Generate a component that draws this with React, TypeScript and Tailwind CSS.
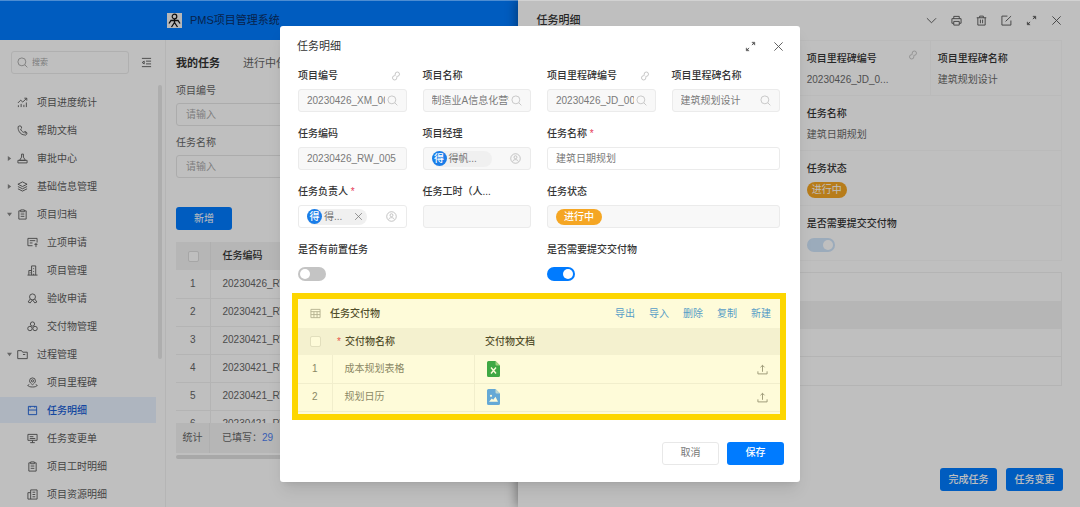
import { ReactNode } from "react"
import clsx from "clsx"

const icons: Record<string, ReactNode> = {
    chart: <path d="M1.5 11V9M4.5 11V7.5M7.5 11V8.5M10.2 11V6M1 6.5L4 3.5L6.3 5.5L10.5 1.5M8 1.3H10.7V4" />,
    phone: <path d="M3 1A1.8 1.8 0 0 1 4 4.4C4.3 6 5.6 7.4 7.4 8A1.9 1.9 0 1 1 8 10.8C4.5 10.6 1.6 7.6 1.2 3.4A1.9 1.9 0 0 1 3 1M9 7.6V9.4" />,
    stamp: <path d="M5 1.2H7V4.5L9.2 8H2.8L5 4.5ZM1 8H11V10.8H1Z" />,
    layers: <path d="M6 1L11 3.5L6 6L1 3.5ZM1 6L6 8.5L11 6M1 8.5L6 11L11 8.5" />,
    clipboard: <path d="M4 2H2V11H10V2H8M4 1H8V3H4ZM4 5.5H8M4 8H8" />,
    apply: <path d="M11 6V1.5H1V9.5H6M3 4H9M3 6.5H6M8 8H11.5M9.8 6.5V11" />,
    building: <path d="M.5 11H11.5M2 11V6H5M5 11V1H9.5V11M7.2 3.5V4.5M7.2 6.5V7.5M7.2 9.5V11M3.5 8V9" />,
    medal: <path d="M6 1A3.2 3.2 0 1 1 6 7.5A3.2 3.2 0 1 1 6 1M3.6 6.5L1.2 9.8L3.5 10.8L6 7.5L8.5 10.8L10.8 9.8L8.4 6.5" />,
    boxes: <path d="M6 1A2.3 2.3 0 1 1 6 5.6A2.3 2.3 0 1 1 6 1M3.2 5.8A2.4 2.4 0 1 1 3.2 10.6A2.4 2.4 0 1 1 3.2 5.8M8.8 5.8A2.4 2.4 0 1 1 8.8 10.6A2.4 2.4 0 1 1 8.8 5.8" />,
    folder: <path d="M.8 10.5V1.8H5L6.2 3.5H11.2V10.5ZM6.5 6H9" />,
    pin: <path d="M6 1A3.2 3.2 0 0 1 9.2 4.2C9.2 6 7.5 7.2 6 8.4C4.5 7.2 2.8 6 2.8 4.2A3.2 3.2 0 0 1 6 1M6 3A1.2 1.2 0 1 1 6 5.4A1.2 1.2 0 1 1 6 3M2.5 8.2L.8 9.2C2 11.5 10 11.5 11.2 9.2L9.5 8.2" />,
    task: <path d="M1.5 1.5H10.5V10.5H1.5ZM1.5 5.5H10.5M3.5 1.5V3M8.5 1.5V3" />,
    monitor: <path d="M1 1.5H11V8H1ZM3 4H7M3 6H9M6 8V10.5M3.5 10.5H8.5" />,
    resource: <path d="M4 11V1H11V11H1V4H4M6 3.5H9M6 6H9M6 8.5H9" />,
    search: <path d="M5.3 1A4.3 4.3 0 1 1 5.3 9.6A4.3 4.3 0 1 1 5.3 1M8.5 8.5L11.3 11.3" />,
    fold: <path d="M1 1.5H11M5.5 4.5H11M5.5 7.5H11M1 10.5H11M3.5 4.5L1.3 6L3.5 7.5Z" />,
    down: <path d="M1 3.5L6 8.5L11 3.5" />,
    printer: <path d="M3 4V1.5H9V4M3 9H1V4H11V9H9M3 7H9V11H3Z" />,
    trash: <path d="M.8 3H11.2M4 3V1.2H8V3M2 3V11H10V3M4.8 5V9M7.2 5V9" />,
    edit: <path d="M7 1.2H1V11H10.8V6M5 7L11 1.2" />,
    close: <path d="M1.5 1.5L10.5 10.5M10.5 1.5L1.5 10.5" />,
    link: <path d="M5 5.2V3.8A2.6 2.6 0 1 1 7.8 6.4H6.8M7 6.8V8.2A2.6 2.6 0 1 1 4.2 5.6H5.2" />,
    user: <path d="M6 .8A5.2 5.2 0 1 1 6 11.2A5.2 5.2 0 1 1 6 .8M6 3A1.6 1.6 0 1 1 6 6.2A1.6 1.6 0 1 1 6 3M3 9.2C3.5 6.6 8.5 6.6 9 9.2" />,
    sheet: <path d="M1 1.5H11V10.5H1ZM1 4H11M1 7.2H11M4.3 4V10.5M7.7 4V10.5" />,
    upload: <path d="M6 8.5V1.5M3.8 3.6L6 1.4L8.2 3.6M1 8V10.8H11V8" />,
}

const Icon = ({ name, className }: { name: string; className?: string }) => (
    <svg viewBox="0 0 12 12" fill="none" stroke="currentColor" strokeLinejoin="round" aria-hidden="true" className={clsx("shrink-0", className ?? "size-[11px]")}>
        {icons[name]}
    </svg>
)

const ExpandIcon = () => (
    <svg viewBox="0 0 12 12" fill="currentColor" stroke="currentColor" aria-hidden="true" className="size-[11px] shrink-0">
        <path d="M7.5 4.5L10 2M4.5 7.5L2 10" />
        <path d="M7.5 1.3H10.7V4.5ZM1.3 7.5V10.7H4.5Z" strokeWidth="0.5" />
    </svg>
)

const menu = [
    { icon: "chart", text: "项目进度统计" },
    { icon: "phone", text: "帮助文档" },
    { icon: "stamp", text: "审批中心", caret: "right" },
    { icon: "layers", text: "基础信息管理", caret: "right" },
    { icon: "clipboard", text: "项目归档", caret: "down" },
    { icon: "apply", text: "立项申请", child: true },
    { icon: "building", text: "项目管理", child: true },
    { icon: "medal", text: "验收申请", child: true },
    { icon: "boxes", text: "交付物管理", child: true },
    { icon: "folder", text: "过程管理", caret: "down" },
    { icon: "pin", text: "项目里程碑", child: true },
    { icon: "task", text: "任务明细", child: true, active: true },
    { icon: "monitor", text: "任务变更单", child: true },
    { icon: "clipboard", text: "项目工时明细", child: true },
    { icon: "resource", text: "项目资源明细", child: true },
]

const Sidebar = () => (
    <aside className="flex w-[166px] shrink-0 flex-col overflow-hidden border-r border-[#f2f2f2] text-[#5c5c5c]">
        <div className="flex items-center gap-3 pt-[11px] pl-[11px]">
            <label className="flex h-[23px] w-[118px] items-center gap-1 rounded-[3px] border border-[#ebebeb] px-[5px] text-[#a6a6a6]">
                <Icon name="search" />
                <input aria-label="搜索" placeholder="搜索" className="w-full min-w-0 text-[8px] outline-none placeholder:text-[#a6a6a6]" />
            </label>
            <button aria-label="收起菜单" className="cursor-pointer"><Icon name="fold" /></button>
        </div>

        <div className="mt-[11px] flex min-h-0 flex-1">
            <nav className="mt-1 flex w-[156px] flex-col gap-0.5">
                {menu.map((item) => (
                    <a key={item.text} href="#" className={clsx("flex h-[26px] shrink-0 items-center", item.child ? "pl-[17px]" : "pl-[7px]", item.active && "bg-[#e8f2ff] font-medium text-[#1a5fd6]")}>
                        <span className="mr-1 w-1.5">
                            {item.caret && (
                                <svg viewBox="0 0 6 6" fill="#888" className={clsx("size-[5px]", item.caret === "down" && "rotate-90")}>
                                    <path d="M1 0L5 3L1 6Z" />
                                </svg>
                            )}
                        </span>
                        <Icon name={item.icon} />
                        <span className="ml-[9px] pt-px">{item.text}</span>
                    </a>
                ))}
            </nav>
            <div className="ml-0.5 h-[274px] w-1 rounded-full bg-[#e8e8e8]" />
        </div>
    </aside>
)

const rows = ["20230426_RW_005", "20230421_RW_004", "20230421_RW_003", "20230421_RW_002", "20230421_RW_001", "20230421_RW_000"]

const Checkbox = ({ label }: { label: string }) => (
    <input type="checkbox" aria-label={label} className="block size-[11px] appearance-none rounded-xs border border-[#dedede] bg-white" />
)

const TaskList = () => (
    <main className="flex min-w-0 flex-1 flex-col pt-[15px] pl-[10px] text-[#666]">
        <div className="flex h-4 items-center gap-[23px] text-[11px]">
            <button className="shrink-0 font-bold text-[#333]">我的任务</button>
            <button className="shrink-0">进行中任务</button>
        </div>

        <label htmlFor="f-project" className="mt-3 leading-4">项目编号</label>
        <input id="f-project" placeholder="请输入" className="mt-1 h-[23px] w-[220px] rounded-[3px] border border-[#e6e6e6] px-[9px] outline-none placeholder:text-[#aaa]" />
        <label htmlFor="f-task" className="mt-[9px] leading-4">任务名称</label>
        <input id="f-task" placeholder="请输入" className="mt-1 h-[23px] w-[220px] rounded-[3px] border border-[#e6e6e6] px-[9px] outline-none placeholder:text-[#aaa]" />

        <button className="mt-[29px] h-[23px] w-14 rounded-[3px] bg-[#007bff] text-white">新增</button>

        <div className="mt-3 h-[181px] overflow-hidden">
            <table className="w-full table-fixed border-collapse text-left">
                <thead>
                    <tr className="h-7 bg-[#f3f3f3]">
                        <th className="w-[34px] border-r border-[#eaeaea] pl-3"><Checkbox label="全选任务" /></th>
                        <th className="pl-3 font-medium text-[#333]">任务编码</th>
                    </tr>
                </thead>
                <tbody>
                    {rows.map((code, i) => (
                        <tr key={code} className="h-7 border-b border-[#f0f0f0]">
                            <td className="border-r border-[#f0f0f0] text-center">{i + 1}</td>
                            <td className="pl-3">{code}</td>
                        </tr>
                    ))}
                </tbody>
            </table>
        </div>
        <div className="flex h-[30px] items-center bg-[#f3f3f3]">
            <span className="flex h-full w-[34px] items-center justify-center border-r border-[#eaeaea]">统计</span>
            <span className="pl-3">已填写：<span className="text-[#4d7ef0]">29</span></span>
        </div>
        <div className="mt-0.5 h-1 rounded-full bg-[#e0e0e0]" />
    </main>
)

const Switch = ({ id, checked, soft }: { id: string; checked?: boolean; soft?: boolean }) => (
    <input
        id={id}
        type="checkbox"
        role="switch"
        defaultChecked={checked}
        className={clsx(
            "flex h-[14px] w-7 appearance-none items-center rounded-full bg-[#c4c4c4] px-0.5 before:size-[10px] before:rounded-full before:bg-white before:content-[''] checked:justify-end",
            soft ? "checked:bg-[#cfe4fa]" : "checked:bg-[#007bff]",
        )}
    />
)

const DetailCell = ({ id, label, link, wide, children }: { id?: string; label?: string; link?: boolean; wide?: boolean; children?: ReactNode }) => (
    <div className={clsx("flex h-[55px] flex-col border-b border-l border-[#f8f8f8] px-[7px] pt-[10px]", wide && "col-span-2")}>
        <div className="flex h-4 items-center justify-between font-medium text-[#333]">
            {id ? <label htmlFor={id}>{label}</label> : label}
            {link && <Icon name="link" className="mr-[5px] mb-2 size-[10px] text-[#bbb]" />}
        </div>
        <div className="mt-[5px] flex h-4 items-center">{children}</div>
    </div>
)

const Drawer = () => (
    <section className="absolute inset-y-0 right-0 z-10 flex w-[52%] flex-col bg-white px-[18px] text-[#6b6b6b] shadow-[-2px_0_10px_rgba(0,0,0,0.35)]">
        <header className="flex h-10 shrink-0 items-center justify-between text-[#555]">
            <h2 className="text-[11px] font-medium text-[#333]">任务明细</h2>
            <div className="flex gap-[14px]">
                <button aria-label="更多"><Icon name="down" /></button>
                <button aria-label="打印"><Icon name="printer" /></button>
                <button aria-label="删除"><Icon name="trash" /></button>
                <button aria-label="编辑"><Icon name="edit" /></button>
                <button aria-label="全屏"><ExpandIcon /></button>
                <button aria-label="关闭"><Icon name="close" /></button>
            </div>
        </header>

        <div className="grid grid-cols-4 border-t border-r border-[#f8f8f8]">
            <DetailCell />
            <DetailCell />
            <DetailCell label="项目里程碑编号" link>20230426_JD_0...</DetailCell>
            <DetailCell label="项目里程碑名称">建筑规划设计</DetailCell>
            <DetailCell wide />
            <DetailCell label="任务名称" wide>建筑日期规划</DetailCell>
            <DetailCell wide />
            <DetailCell label="任务状态" wide>
                <span className="rounded-full bg-[#f5a623] px-[5px] leading-4 text-white">进行中</span>
            </DetailCell>
            <DetailCell wide />
            <DetailCell id="detail-need" label="是否需要提交交付物" wide>
                <Switch id="detail-need" checked soft />
            </DetailCell>
        </div>

        <div className="mt-[11px] border border-[#f0f0f0]">
            <div className="h-7" />
            <div className="h-7 bg-[#f3f3f3]" />
            <div className="h-7 border-b border-[#f0f0f0]" />
            <div className="h-7" />
        </div>

        <footer className="mt-auto -mr-px flex justify-end gap-[9px] pb-4">
            <button className="h-[23px] w-[57px] rounded-[3px] bg-[#007bff] font-medium text-white">完成任务</button>
            <button className="h-[23px] w-[57px] rounded-[3px] bg-[#007bff] font-medium text-white">任务变更</button>
        </footer>
    </section>
)

const Label = ({ id, text, required, link }: { id: string; text: string; required?: boolean; link?: boolean }) => (
    <div className="flex h-4 items-center justify-between">
        <label htmlFor={id} className="font-medium text-[#333]">
            {text}
            {required && <span className="text-[#e5395a]"> *</span>}
        </label>
        {link && <Icon name="link" className="mr-[6px] size-[10px] text-[#bbb]" />}
    </div>
)

type FieldProps = {
    id: string
    label: string
    value?: string
    required?: boolean
    link?: boolean
    search?: boolean
    wide?: boolean
    editable?: boolean
}

const Field = ({ id, label, value, required, link, search, wide, editable }: FieldProps) => (
    <div className={clsx("flex min-w-0 flex-col gap-[5px]", wide && "col-span-2")}>
        <Label id={id} text={label} required={required} link={link} />
        <div className={clsx("flex h-[23px] items-center gap-0.5 rounded-[3px] border border-[#ebebeb] pl-2", search ? "pr-2" : "pr-[10px]", !editable && "bg-[#f8f8f8]")}>
            <input id={id} defaultValue={value} readOnly={!editable} className="w-full min-w-0 text-[#7a7a7a] outline-none" />
            {search && <Icon name="search" className="size-[11px] text-[#c4c4c4]" />}
        </div>
    </div>
)

const PersonField = ({ id, label, name, required, removable }: { id: string; label: string; name: string; required?: boolean; removable?: boolean }) => (
    <div className="flex min-w-0 flex-col gap-[5px]">
        <Label id={id} text={label} required={required} />
        <div className={clsx("flex h-[23px] items-center justify-between rounded-[3px] border border-[#ebebeb] pr-[9px] pl-2", !removable && "bg-[#f8f8f8]")}>
            <span className="flex h-4 w-[60px] items-center gap-0.5 rounded-full bg-[#f0f0f0] text-[#777]">
                <span className="flex size-[15px] items-center justify-center rounded-full bg-[#1a7de8] font-medium text-white">得</span>
                {name}
                {removable && <button aria-label="移除" className="mr-1 ml-auto"><Icon name="close" className="size-[9px]" /></button>}
            </span>
            <button id={id} aria-label="选择人员"><Icon name="user" className="size-[11px] text-[#bdbdbd]" /></button>
        </div>
    </div>
)

const SheetFile = () => (
    <svg viewBox="0 0 13 16" className="h-4 w-[13px]" aria-label="表格文件">
        <path d="M1.5 0H8.5L13 4.5V14.5A1.5 1.5 0 0 1 11.5 16H1.5A1.5 1.5 0 0 1 0 14.5V1.5A1.5 1.5 0 0 1 1.5 0Z" fill="#1f9e50" />
        <path d="M8.5 0L13 4.5H9.5A1 1 0 0 1 8.5 3.5Z" fill="#8fce94" />
        <path d="M4 6.5L9 12.5M9 6.5L4 12.5" stroke="#fff" strokeWidth="1.4" />
    </svg>
)

const ImageFile = () => (
    <svg viewBox="0 0 13 16" className="h-4 w-[13px]" aria-label="图片文件">
        <path d="M1.5 0H8.5L13 4.5V14.5A1.5 1.5 0 0 1 11.5 16H1.5A1.5 1.5 0 0 1 0 14.5V1.5A1.5 1.5 0 0 1 1.5 0Z" fill="#4c9ffc" />
        <path d="M8.5 0L13 4.5H9.5A1 1 0 0 1 8.5 3.5Z" fill="#b5d8f7" />
        <path d="M2 12.8L4.8 9.5L6.2 10.8L8.5 7.8L11 12.8Z" fill="#fff" />
        <circle cx="4" cy="6.8" r="1.1" fill="#fff" />
    </svg>
)

const Deliverables = () => (
    <section className="relative mt-[18px] mr-5 ml-[18px]">
        <header className="flex h-[29px] items-center pr-[9px] pl-3">
            <Icon name="sheet" className="size-[11px] text-[#aaa]" />
            <h3 className="ml-[9px] font-medium text-[#333]">任务交付物</h3>
            <div className="ml-auto flex gap-[14px] text-[#3a91ea]">
                <button>导出</button>
                <button>导入</button>
                <button>删除</button>
                <button>复制</button>
                <button>新建</button>
            </div>
        </header>
        <table className="w-full table-fixed border-collapse text-left text-[#777]">
            <thead>
                <tr className="h-[27px] bg-[#f4f4f4] text-[#333]">
                    <th className="w-[34px] pl-3"><Checkbox label="全选交付物" /></th>
                    <th className="w-[142px] pl-[5px] font-medium"><span className="mr-1 text-[#e5395a]">*</span>交付物名称</th>
                    <th className="pl-[11px] font-medium">交付物文档</th>
                </tr>
            </thead>
            <tbody>
                {["成本规划表格", "规划日历"].map((name, i) => (
                    <tr key={name} className="h-7 border-b border-[#f0f0f0]">
                        <td className="border-r border-[#f0f0f0] text-center">{i + 1}</td>
                        <td className="border-r border-[#f0f0f0] pl-3">{name}</td>
                        <td className="pr-3 pl-3">
                            <div className="flex items-center justify-between">
                                {i === 0 ? <SheetFile /> : <ImageFile />}
                                <button aria-label="上传"><Icon name="upload" className="size-[11px] text-[#888]" /></button>
                            </div>
                        </td>
                    </tr>
                ))}
            </tbody>
        </table>
        {/* highlight frame */}
        <div className="pointer-events-none absolute -inset-x-[6px] -top-[6px] -bottom-[8px] border-[6px] border-[#fdd600] bg-[#fbe600]/15" />
    </section>
)

const TaskDialog = () => (
    <div role="dialog" aria-label="任务明细" className="w-[520px] max-w-full rounded-[3px] bg-white shadow-lg">
        <header className="flex h-10 items-center justify-between pr-4 pl-[17px] text-[#555]">
            <h2 className="text-[11px] text-[#333]">任务明细</h2>
            <div className="flex gap-[17px]">
                <button aria-label="全屏"><ExpandIcon /></button>
                <button aria-label="关闭"><Icon name="close" /></button>
            </div>
        </header>

        <div className="grid grid-cols-4 gap-x-4 gap-y-[14px] pt-0.5 pr-5 pl-[18px]">
            <Field id="xm-code" label="项目编号" value="20230426_XM_001" link search />
            <Field id="xm-name" label="项目名称" value="制造业A信息化营销项目" search />
            <Field id="jd-code" label="项目里程碑编号" value="20230426_JD_001" link search />
            <Field id="jd-name" label="项目里程碑名称" value="建筑规划设计" search />

            <Field id="rw-code" label="任务编码" value="20230426_RW_005" />
            <PersonField id="manager" label="项目经理" name="得帆..." />
            <Field id="rw-name" label="任务名称" value="建筑日期规划" required wide editable />

            <PersonField id="owner" label="任务负责人" name="得..." required removable />
            <Field id="hours" label="任务工时（人..." />
            <div className="col-span-2 flex flex-col gap-[5px]">
                <div className="h-4 font-medium text-[#333]">任务状态</div>
                <div className="flex h-[23px] items-center rounded-[3px] border border-[#ebebeb] bg-[#f8f8f8] pl-2">
                    <span className="rounded-full bg-[#f5a623] px-2 leading-4 font-medium text-white">进行中</span>
                </div>
            </div>

            <div className="col-span-2 flex flex-col gap-[9px]">
                <Label id="has-prev" text="是否有前置任务" />
                <Switch id="has-prev" />
            </div>
            <div className="col-span-2 flex flex-col gap-[9px]">
                <Label id="need-submit" text="是否需要提交交付物" />
                <Switch id="need-submit" checked />
            </div>
        </div>

        <Deliverables />

        <footer className="flex justify-end gap-2 px-4 pt-[30px] pb-[17px]">
            <button className="h-[23px] w-[57px] rounded-[3px] border border-[#e8e8e8] text-[#777]">取消</button>
            <button className="h-[23px] w-[57px] rounded-[3px] bg-[#007bff] font-medium text-white">保存</button>
        </footer>
    </div>
)

export default function App() {
    return (
        <div className="relative flex h-screen flex-col overflow-hidden bg-white font-[family-name:'Liberation_Sans','Noto_Sans_CJK_SC',sans-serif] text-[10px] leading-4">
            <header className="flex h-10 shrink-0 items-center gap-2 bg-[#007bff] pl-[167px]">
                <svg viewBox="0 0 15 15" className="size-[15px]" aria-hidden="true">
                    <rect width="15" height="15" fill="#f4f4f4" />
                    <circle cx="7.5" cy="3.5" r="2.3" fill="none" stroke="#111" strokeWidth="1.2" />
                    <path d="M7.5 6V10M7.5 7.5H4L2 10.5M7.5 7.5H11L13 10.5M7.5 9.5L4.5 14M7.5 9.5L10.5 14" fill="none" stroke="#111" strokeWidth="1.3" />
                </svg>
                <h1 className="text-[11px] text-[#0b2e66]">PMS项目管理系统</h1>
            </header>
            <div className="flex min-h-0 flex-1">
                <Sidebar />
                <TaskList />
            </div>

            <Drawer />

            <div className="absolute inset-0 z-20 flex items-center justify-center border-t border-white/30 bg-black/25">
                <TaskDialog />
            </div>
        </div>
    )
}
